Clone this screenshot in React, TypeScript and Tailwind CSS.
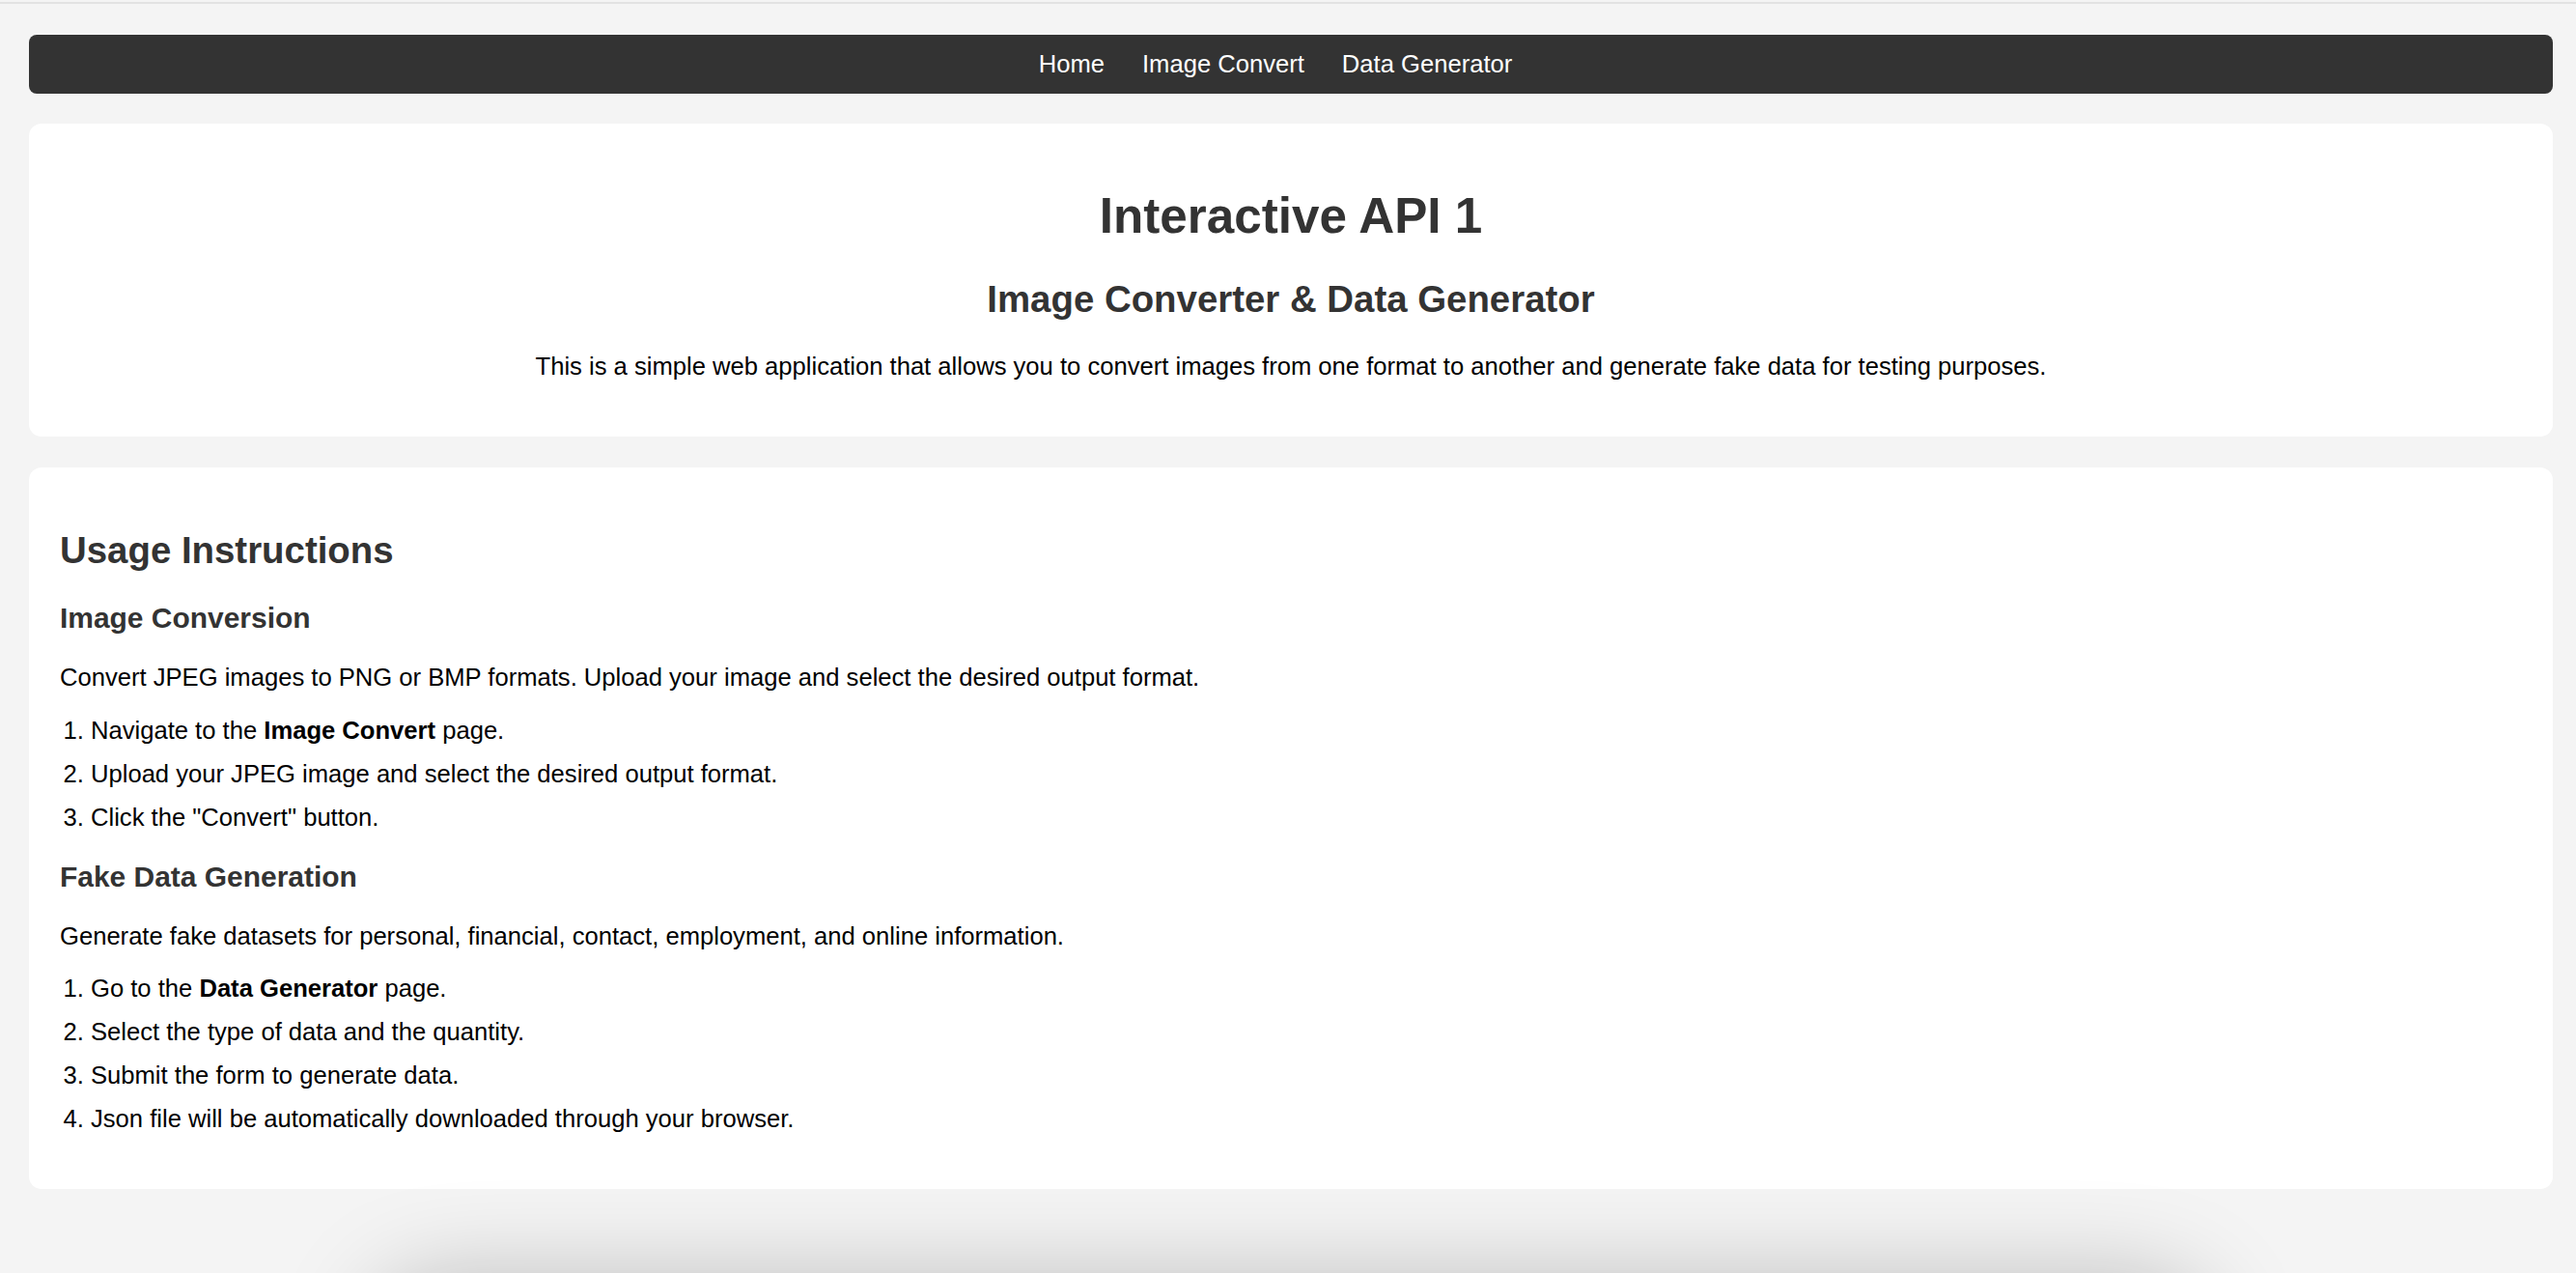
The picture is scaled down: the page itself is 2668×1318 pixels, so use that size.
import React from "react";

const App = () => {
  const links = ["Home", "Image Convert", "Data Generator"];

  return (
    <div className="h-screen overflow-hidden bg-[#f4f4f4] font-['Liberation_Sans',Arial,sans-serif] leading-[normal] text-black">
      {/* top edge */}
      <div className="h-[2px]" />
      <div className="h-[2px] bg-[#e2e2e2]" />

      <div className="pl-[30px] pr-[24px] pt-[32px]">
        {/* Nav */}
        <nav className="flex justify-center gap-[7px] rounded-[8px] bg-[#333333] py-[16px]">
          {links.map((l) => (
            <a key={l} href="#" className="mr-[32px] text-[25.6px] leading-[normal] text-white">
              {l}
            </a>
          ))}
        </nav>

        {/* Intro card */}
        <section className="mt-[31px] rounded-[13px] bg-white p-[32px] text-center">
          <h1 className="my-[34.3px] text-[51.2px] font-bold leading-[normal] text-[#333333]">
            Interactive API 1
          </h1>
          <h2 className="mt-[31.9px] mb-[33.5px] text-[38.4px] font-bold leading-[normal] text-[#333333]">
            Image Converter &amp; Data Generator
          </h2>
          <p className="my-[25.6px] text-[25.6px] leading-[normal]">
            This is a simple web application that allows you to convert images from one format to another and generate fake data for testing purposes.
          </p>
        </section>

        {/* Usage card */}
        <section className="mt-[32px] rounded-[13px] bg-white p-[32px]">
          <h2 className="my-[31.9px] text-[38.4px] font-bold leading-[normal] text-[#333333]">
            Usage Instructions
          </h2>

          <h3 className="my-[29.95px] text-[29.95px] font-bold leading-[normal] text-[#333333]">
            Image Conversion
          </h3>
          <p className="my-[25.6px] text-[25.6px] leading-[normal]">
            Convert JPEG images to PNG or BMP formats. Upload your image and select the desired output format.
          </p>
          <ol className="my-[25.6px] list-decimal pl-[32px] text-[25.6px] leading-[normal]">
            <li className="mb-[16px]">
              Navigate to the <strong className="font-bold">Image Convert</strong> page.
            </li>
            <li className="mb-[16px]">Upload your JPEG image and select the desired output format.</li>
            <li className="mb-[16px]">Click the "Convert" button.</li>
          </ol>

          <h3 className="my-[29.95px] text-[29.95px] font-bold leading-[normal] text-[#333333]">
            Fake Data Generation
          </h3>
          <p className="my-[25.6px] text-[25.6px] leading-[normal]">
            Generate fake datasets for personal, financial, contact, employment, and online information.
          </p>
          <ol className="my-[25.6px] list-decimal pl-[32px] text-[25.6px] leading-[normal]">
            <li className="mb-[16px]">
              Go to the <strong className="font-bold">Data Generator</strong> page.
            </li>
            <li className="mb-[16px]">Select the type of data and the quantity.</li>
            <li className="mb-[16px]">Submit the form to generate data.</li>
            <li className="mb-[16px]">Json file will be automatically downloaded through your browser.</li>
          </ol>
        </section>

        {/* panel below the fold, only its shadow shows */}
        <div className="mx-auto mt-[96px] h-[300px] w-[1900px] rounded-[70px] bg-[#f4f4f4] shadow-[0_0_100px_rgba(0,0,0,0.25)]" />
      </div>
    </div>
  );
};

export default App;
